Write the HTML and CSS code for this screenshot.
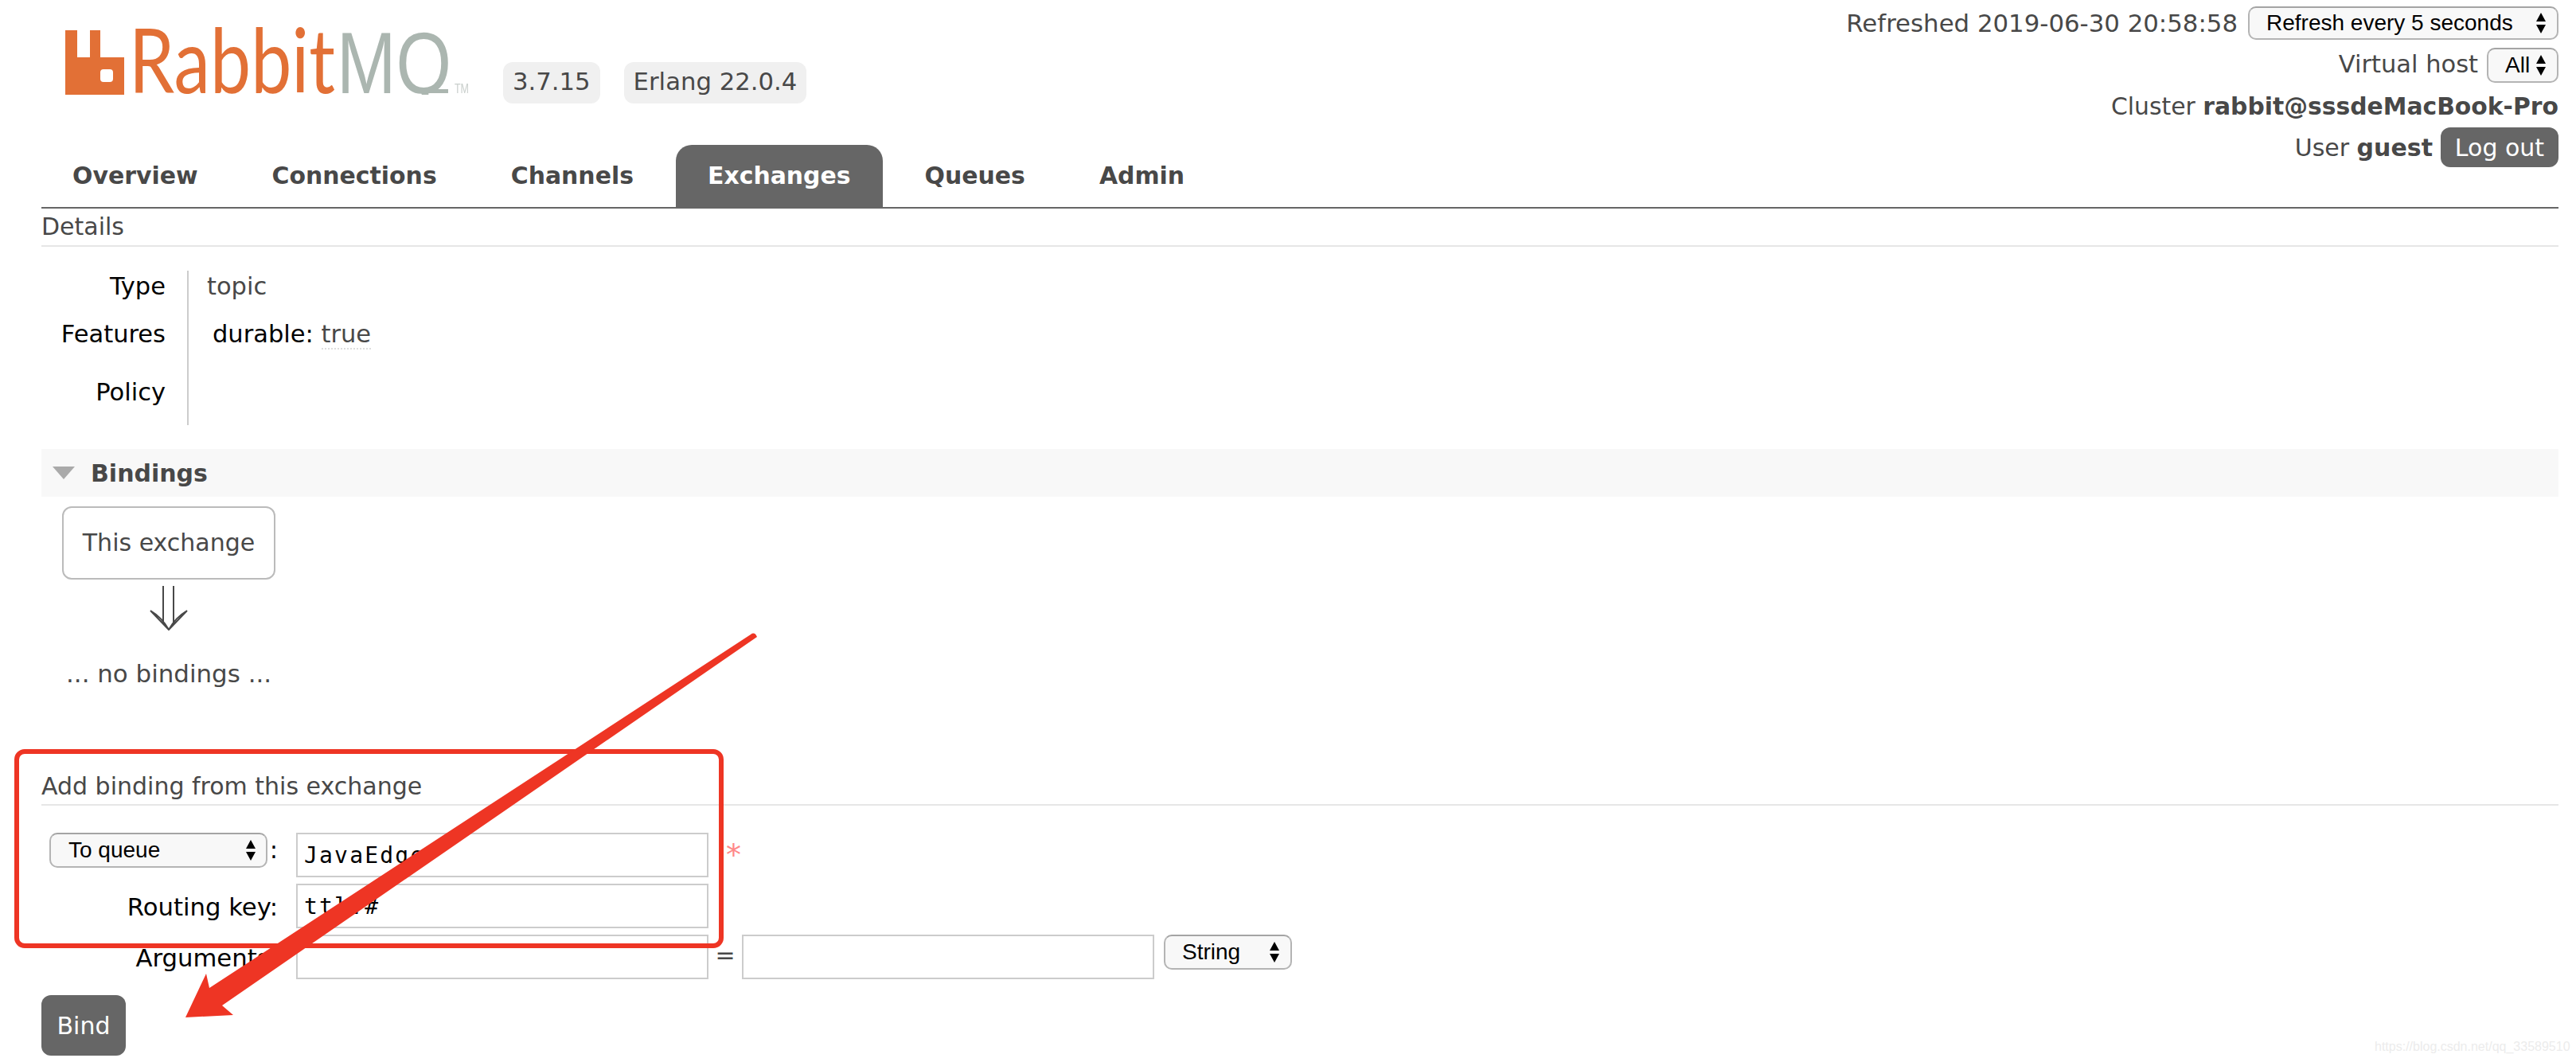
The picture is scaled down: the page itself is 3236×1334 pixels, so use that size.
FILE: index.html
```html
<!DOCTYPE html>
<html lang="en">
<head>
<meta charset="utf-8">
<title>RabbitMQ Management</title>
<link rel="stylesheet" href="styles.css">
</head>
<body>
<div class="page">
  <header class="header">
    <div class="brand">
      <svg class="logo" width="510" height="90" viewBox="82 36 510 90">
        <defs><clipPath id="baseline"><rect x="420" y="30" width="150" height="89"/></clipPath></defs>
        <path class="logo-icon" fill-rule="evenodd" d="M82 38H97V72H113V38H126V72H156V119H82ZM130 87H138Q142 87 142 91V99Q142 103 138 103H130Q126 103 126 99V91Q126 87 130 87Z"/>
        <text class="logo-rabbit" x="162" y="117" textLength="259" lengthAdjust="spacingAndGlyphs">Rabbit</text>
        <g clip-path="url(#baseline)"><text class="logo-mq" x="423" y="117" textLength="144" lengthAdjust="spacingAndGlyphs">MQ</text></g>
        <rect class="logo-tail" x="536" y="112" width="27" height="5"/>
        <text class="logo-tm" x="571" y="117" textLength="18" lengthAdjust="spacingAndGlyphs">TM</text>
      </svg>
      <span class="badge">3.7.15</span>
      <span class="badge">Erlang 22.0.4</span>
    </div>
    <div class="status">
      <div class="status-row status-refresh">
        <span class="digits">Refreshed 2019-06-30 20:58:58</span>
        <div class="select select-refresh"><span>Refresh every 5 seconds</span><svg class="updown" width="14" height="26" viewBox="0 0 14 26"><path d="M7 0L13 11H1ZM1 15H13L7 26Z"/></svg></div>
      </div>
      <div class="status-row status-vhost">
        <span class="vhost-label">Virtual host</span>
        <div class="select select-vhost"><span>All</span><svg class="updown" width="14" height="26" viewBox="0 0 14 26"><path d="M7 0L13 11H1ZM1 15H13L7 26Z"/></svg></div>
      </div>
      <div class="status-row status-cluster"><span>Cluster <b>rabbit@sssdeMacBook-Pro</b></span></div>
      <div class="status-row status-user">
        <span>User <b>guest</b></span>
        <button class="btn btn-logout" type="button">Log out</button>
      </div>
    </div>
  </header>

  <nav class="tabs">
    <a class="tab">Overview</a>
    <a class="tab">Connections</a>
    <a class="tab">Channels</a>
    <a class="tab tab-active">Exchanges</a>
    <a class="tab">Queues</a>
    <a class="tab">Admin</a>
  </nav>

  <h2 class="section-title">Details</h2>
  <div class="facts">
    <div class="fact-label fact-1">Type</div><div class="fact-value fact-1">topic</div>
    <div class="fact-label fact-2">Features</div><div class="fact-value fact-2 fact-features"><span class="key">durable:</span> <span class="dotted">true</span></div>
    <div class="fact-label fact-3">Policy</div><div class="fact-value fact-3"></div>
  </div>

  <div class="collapsible"><span class="triangle"></span><span>Bindings</span></div>
  <div class="node">This exchange</div>
  <svg class="flow-arrow" width="48" height="56" viewBox="0 0 48 56"><path d="M17 0V46M30 0V46M1 31L24 55L47 31M1 31Q16 40 24 55Q32 40 47 31"/></svg>
  <p class="no-bindings">... no bindings ...</p>

  <h2 class="section-title section-add">Add binding from this exchange</h2>
  <form class="bind-form">
    <div class="form-row">
      <div class="form-label form-label-select">
        <div class="select select-dest"><span>To queue</span><svg class="updown" width="14" height="26" viewBox="0 0 14 26"><path d="M7 0L13 11H1ZM1 15H13L7 26Z"/></svg></div><span class="colon">:</span>
      </div>
      <input class="field" type="text" value="JavaEdge">
      <span class="required">*</span>
    </div>
    <div class="form-row">
      <label class="form-label">Routing key:</label>
      <input class="field" type="text" value="ttl.#">
    </div>
    <div class="form-row">
      <label class="form-label">Arguments:</label>
      <input class="field" type="text">
      <span class="equals">=</span>
      <input class="field" type="text">
      <div class="select select-type"><span>String</span><svg class="updown" width="14" height="26" viewBox="0 0 14 26"><path d="M7 0L13 11H1ZM1 15H13L7 26Z"/></svg></div>
    </div>
    <button class="btn btn-bind" type="button">Bind</button>
  </form>

  <svg class="annotation" width="3236" height="1334" viewBox="0 0 3236 1334">
    <rect class="mark-box" x="21" y="944" width="885" height="244" rx="10"/>
    <path class="mark-arrow" d="M943 797Q948 793 951 800L279 1263L293 1275L233 1278L259 1223L263 1241Z"/>
  </svg>
  <div class="watermark">https://blog.csdn.net/qq_33589510</div>
</div>
</body>
</html>
```
FILE: styles.css
```css
* { box-sizing: border-box; }
html, body { margin: 0; padding: 0; background: #fff; }
.page {
  position: relative;
  width: 3236px;
  height: 1334px;
  padding: 0 22px 0 52px;
  overflow: hidden;
  font-family: "DejaVu Sans", Verdana, sans-serif;
  font-size: 30px;
  color: #484848;
}

/* header */
.header { display: flex; justify-content: space-between; height: 182px; }
.brand { display: flex; align-items: flex-start; padding: 36px 0 0 30px; }
.logo { margin-right: 40px; display: block; overflow: visible; filter: blur(0.6px); }
.logo-icon { fill: #e27036; }
.logo-rabbit { font-family: Lato, "Open Sans", sans-serif; font-weight: 400; font-size: 112px; fill: #e27036; }
.logo-mq { font-family: "Liberation Sans", Arial, sans-serif; font-weight: 400; font-size: 110px; fill: #abb6b0; }
.logo-tail { fill: #abb6b0; }
.logo-tm { font-family: "Liberation Sans", sans-serif; font-size: 16px; fill: #c9cfcc; }
.badge {
  margin-top: 42px;
  margin-right: 30px;
  height: 52px;
  line-height: 50px;
  padding: 0 12px;
  border-radius: 12px;
  background: #f0f0f0;
  font-size: 30.7px;
}
.status { display: flex; flex-direction: column; align-items: flex-end; padding-top: 8px; }
.status-row { display: flex; flex: none; align-items: center; justify-content: flex-end; }
.status-refresh { height: 42px; gap: 13px; }
.status-vhost { height: 44px; margin-top: 10px; gap: 11px; }
.status-cluster { height: 42px; margin-top: 8px; font-size: 29.8px; }
.status-user { height: 50px; margin-top: 6px; gap: 10px; }
.digits { font-size: 30.8px; }
.vhost-label { font-size: 30.5px; line-height: 42px; margin-bottom: 2px; }

/* native-looking selects */
.select {
  display: flex;
  align-items: center;
  justify-content: space-between;
  border: 2px solid #b4b4b4;
  border-top-color: #a4a4a4;
  border-radius: 10px;
  background: #f8f8f8;
  color: #000;
  font-family: "Liberation Sans", Arial, sans-serif;
  font-size: 28px;
}
.select-refresh { width: 390px; height: 42px; padding: 0 13px 0 21px; }
.select-vhost { width: 90px; height: 44px; padding: 0 13px 0 21px; }
.select-dest { width: 275px; height: 44px; padding: 0 12px 0 22px; }
.select-type { width: 161px; height: 44px; padding: 0 13px 0 21px; margin-left: 12px; }
.updown { display: block; flex: none; }
.updown path { fill: #000; }

.btn {
  border: 0;
  background: #666;
  color: #fff;
  font-family: "DejaVu Sans", Verdana, sans-serif;
  font-size: 30px;
  padding: 0;
}
.btn-logout { width: 148px; height: 50px; border-radius: 12px; }
.btn-bind { display: block; width: 106px; height: 76px; margin-top: 20px; border-radius: 12px; }

/* tabs */
.tabs { display: flex; gap: 13px; height: 80px; border-bottom: 2px solid #666; }
.tab {
  height: 78px;
  line-height: 78px;
  padding: 0 40px;
  font-weight: 700;
  font-size: 29.9px;
}
.tab:first-child { padding-left: 39px; }
.tab-active { background: #666; color: #fff; border-radius: 20px 20px 0 0; }

/* sections */
.section-title {
  margin: 0;
  height: 48px;
  line-height: 46px;
  font-size: 30px;
  font-weight: 400;
  border-bottom: 2px solid #e6e6e6;
}
.section-add { margin-top: 98px; line-height: 48px; }

.facts {
  display: grid;
  grid-template-columns: 183px auto;
  grid-template-rows: 50px 80px 64px;
  justify-content: start;
  margin-top: 30px;
  font-size: 30.5px;
}
.fact-label { padding-right: 27px; text-align: right; color: #000; line-height: 39px; }
.fact-value { border-left: 2px solid #ccc; padding-left: 23px; line-height: 39px; }
.fact-2 { padding-top: 10px; }
.fact-3 { padding-top: 3px; }
.fact-features { padding-left: 30px; }
.key { color: #000; }
.dotted { border-bottom: 2px dotted #ddd; }

.collapsible {
  display: flex;
  align-items: center;
  height: 60px;
  margin-top: 30px;
  padding-left: 14px;
  background: #f8f8f8;
  font-weight: 700;
}
.triangle {
  width: 0;
  height: 0;
  margin-right: 20px;
  border-style: solid;
  border-width: 16px 14px 0;
  border-color: #aaa transparent transparent;
}
.node {
  width: 268px;
  height: 92px;
  margin: 12px 0 0 26px;
  border: 2px solid #bbb;
  border-radius: 12px;
  line-height: 88px;
  text-align: center;
}
.flow-arrow { display: block; margin: 8px 0 0 136px; }
.flow-arrow path { fill: none; stroke: #484848; stroke-width: 2; }
.no-bindings { margin: 34px 0 0 31px; line-height: 40px; font-size: 30.9px; }

/* form */
.bind-form { margin-top: 34px; }
.form-row { display: flex; align-items: flex-start; height: 56px; margin-bottom: 8px; }
.form-row:last-of-type { margin-bottom: 0; }
.form-label {
  width: 297px;
  margin-right: 23px;
  line-height: 60px;
  text-align: right;
  color: #000;
  font-size: 30.7px;
}
.form-label-select { display: flex; align-items: flex-start; padding-left: 10px; }
.colon { margin-left: 3px; line-height: 44px; color: #000; }
.field {
  width: 518px;
  height: 56px;
  padding: 0 8px;
  border: 2px solid #ccc;
  border-radius: 0;
  background: #fff;
  color: #000;
  font-family: "DejaVu Sans Mono", Menlo, monospace;
  font-size: 28px;
  letter-spacing: 2.2px;
  outline: 0;
}
.required { margin-left: 22px; line-height: 56px; color: #f88; font-size: 38px; }
.equals { width: 42px; text-align: center; line-height: 52px; }

/* overlays */
.annotation { position: absolute; left: 0; top: 0; pointer-events: none; }
.mark-box { fill: none; stroke: #ee3524; stroke-width: 6; }
.mark-arrow { fill: #ee3524; }
.watermark {
  position: absolute;
  left: 2983px;
  top: 1305px;
  font-family: "Liberation Sans", Arial, sans-serif;
  font-size: 16px;
  line-height: 20px;
  color: #ececec;
  white-space: nowrap;
}
```
